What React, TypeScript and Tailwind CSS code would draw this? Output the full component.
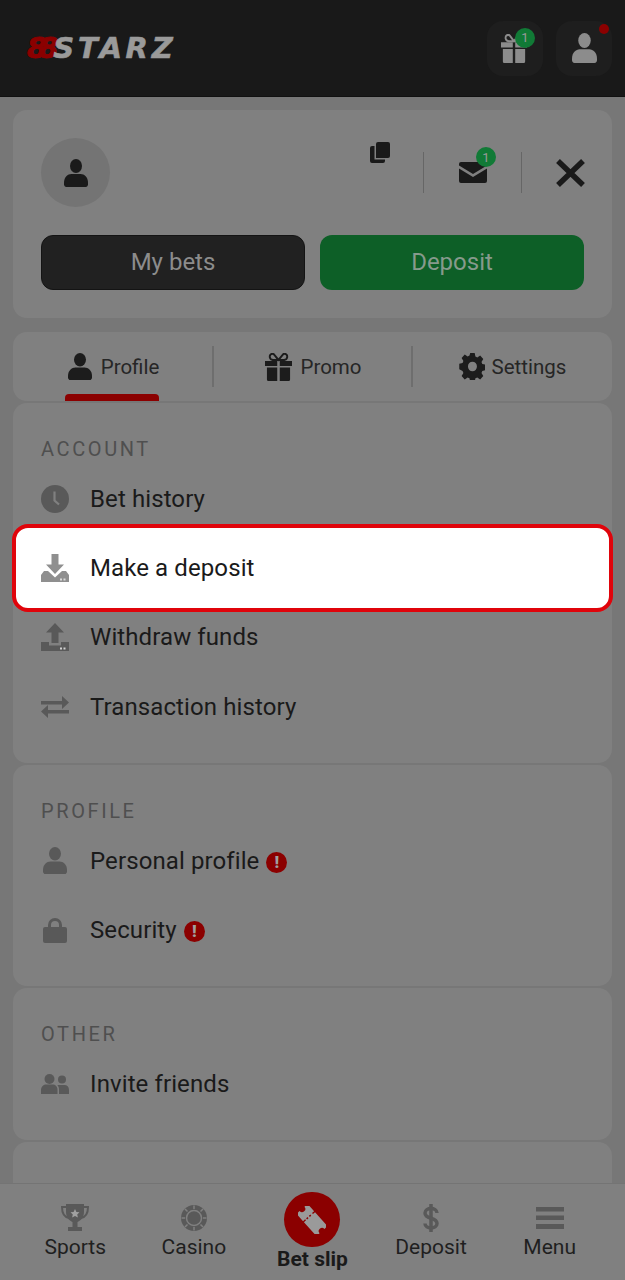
const PersonIcon = ({ className }: { className?: string }) => (
  <svg className={className} viewBox="1 1 26 26" preserveAspectRatio="none" fill="currentColor">
    <circle cx="14" cy="7.500" r="6.500" />
    <path d="M1 23c0-5 4-8 8-8h10c4 0 8 3 8 8v1.500c0 1.400-1.100 2.500-2.500 2.500h-21C2.100 27 1 25.900 1 24.500z" />
  </svg>
);

const GiftIcon = ({ className }: { className?: string }) => (
  <svg className={className} viewBox="0 0 28 28" preserveAspectRatio="none" fill="currentColor">
    <path d="M0 8h12.700v5H0zM15.300 8H28v5H15.300zM2 14.500h10.700V28H3.500A1.500 1.500 0 0 1 2 26.500zM15.300 14.500H26v12a1.500 1.500 0 0 1-1.500 1.500h-9.200z" />
    <path d="M14 7 9.500 1.600c-1-1.100-3-1-4 .3-1 1.400-.6 3.500.8 4.400L8 7h12l1.700-.7c1.400-.9 1.800-3 .8-4.400-1-1.300-3-1.400-4-.3z" fill="none" stroke="currentColor" strokeWidth="2" />
  </svg>
);

const GearIcon = ({ className }: { className?: string }) => (
  <svg className={className} viewBox="-1 0 29 28" preserveAspectRatio="none" fill="currentColor">
    <path fillRule="evenodd" d="M11.500 0h5l.8 3.700 2.100.9 3.200-2 3.500 3.500-2 3.200.9 2.100 3.700.8v5.600l-3.700.8-.9 2.100 2 3.200-3.500 3.500-3.200-2-2.100.9-.8 3.700h-5l-.8-3.700-2.100-.9-3.200 2-3.500-3.500 2-3.200-.9-2.100L-.7 16.800v-5.600l3.700-.8.900-2.100-2-3.200 3.500-3.500 3.200 2 2.100-.9zM14 9a5 5 0 1 0 0 10 5 5 0 0 0 0-10z" />
  </svg>
);

const ClockIcon = ({ className }: { className?: string }) => (
  <svg className={className} viewBox="0 0 28 28">
    <circle cx="14" cy="14" r="14" fill="currentColor" />
    <path d="M13.500 6.500v9l4.500 4" fill="none" stroke="#808080" strokeWidth="2.200" />
  </svg>
);

const TrayIcon = ({ className, up }: { className?: string; up?: boolean }) => (
  <svg className={className} viewBox="0 0 28 28" fill="currentColor">
    {up ? (
      <>
        <path d="M14 0 23 9.500h-5.500V20h-7V9.500H5z" />
        <path d="M0 19h8v3.500h12V19h8v9H0z" />
      </>
    ) : (
      <>
        <path d="M10.500 0h7v10.500H23L14 20 5 10.500h5.500z" />
        <path d="M0 21 3 17h4L14 23.500 21 17h4l3 4v7H0z" />
      </>
    )}
    <rect x="19" y="24.500" width="2" height="2" fill="#eee" opacity=".8" />
    <rect x="22.500" y="24.500" width="2" height="2" fill="#eee" opacity=".8" />
  </svg>
);

const SwapIcon = ({ className }: { className?: string }) => (
  <svg className={className} viewBox="0 0 28 22" fill="currentColor">
    <path d="M0 5h21V0l7 6.500-7 6.500V8.500H0zM28 14H7V9l-7 6.500L7 22v-4.500h21z" />
  </svg>
);

const LockIcon = ({ className }: { className?: string }) => (
  <svg className={className} viewBox="0 0 24 26" preserveAspectRatio="none" fill="currentColor">
    <path d="M5 11V8a7 7 0 0 1 14 0v3h-3V8a4 4 0 0 0-8 0v3z" />
    <rect x="0" y="10" width="24" height="16" rx="2" />
  </svg>
);

const FriendsIcon = ({ className }: { className?: string }) => (
  <svg className={className} viewBox="0 0 28 20" fill="currentColor">
    <circle cx="8.500" cy="5" r="5" />
    <circle cx="21" cy="5.500" r="4" />
    <path d="M0 16c0-3.500 2.500-5.500 5.500-5.500h6c3 0 5 2 5 5.500v4H0z" />
    <path d="M18 20v-4.500c0-2-.7-3.500-1.800-4.500h7.300c2.500 0 4.500 1.800 4.500 5v4z" />
  </svg>
);

const Alert = () => (
  <span className="mt-[3px] ml-[7px] flex h-[21px] w-[21px] items-center justify-center rounded-full bg-[#8b0000] text-[17px] leading-none font-black text-[#a0a0a0]">
    !
  </span>
);

const CountBadge = ({ className }: { className: string }) => (
  <span className={`absolute flex h-[20px] w-[20px] items-center justify-center rounded-full bg-[#117a36] text-[13px] leading-none text-[#999] ${className}`}>
    1
  </span>
);

const Row = ({ icon, label, alert }: { icon: React.ReactNode; label: string; alert?: boolean }) => (
  <div className="flex h-[69.300px] items-center pl-[28px]">
    <div className="flex w-[28px] justify-center text-[#595959]">{icon}</div>
    <span className="ml-[21px] text-[24px] tracking-[0.1px] text-[#1a1a1a]">{label}</span>
    {alert && <Alert />}
  </div>
);

const Heading = ({ children }: { children: string }) => (
  <div className="pl-[28px] text-[20px] leading-[24px] tracking-[2.600px] text-[#4f4f4f]">{children}</div>
);

const Tab = ({ icon, label, active, className }: { icon: React.ReactNode; label: string; active?: boolean; className?: string }) => (
  <div className={`relative flex items-center justify-center text-[#1c1c1c] ${className ?? ""}`}>
    {icon}
    <span className="mt-[2px] text-[20.500px] text-[#262626]">{label}</span>
    {active && <div className="absolute bottom-0 left-[52px] h-[7px] w-[94px] rounded-t-[4px] bg-[#8b0000]" />}
  </div>
);

const NavItem = ({ icon, label }: { icon: React.ReactNode; label: string }) => (
  <div className="flex flex-col items-center text-[#595959]">
    <div className="flex h-[32px] items-center">{icon}</div>
    <span className="-mt-[1px] text-[21px] leading-[28px] text-[#1f1f1f]">{label}</span>
  </div>
);

export default function App() {
  return (
    <div className="flex h-[1280px] w-[625px] flex-col overflow-hidden bg-[#777777] font-['Roboto',sans-serif]">
      {/* Header */}
      <header className="flex h-[97px] shrink-0 items-center border-b border-[#111] bg-[#191919] pr-[13px] pl-[27px]">
        <div className="mt-[1px] flex items-baseline text-[29px] leading-none font-bold italic font-['DejaVu_Sans',sans-serif]">
          <span className="tracking-[-9px] text-[#8b0000] [-webkit-text-stroke:1px_#8b0000]">88</span>
          <span className="relative ml-[4px] tracking-[3.800px] text-[#9a9a9a] [-webkit-text-stroke:0.6px_#9a9a9a]">STARZ</span>
        </div>
        <div className="ml-auto flex gap-[13px]">
          <div className="relative flex h-[55px] w-[56px] items-center justify-center rounded-[16px] bg-[#1e1e1e] text-[#8c8c8c]">
            <GiftIcon className="mr-[2px] h-[29px] w-[26px]" />
            <CountBadge className="top-[7px] left-[28px]" />
          </div>
          <div className="relative flex h-[55px] w-[56px] items-center justify-center rounded-[16px] bg-[#1e1e1e] text-[#8c8c8c]">
            <PersonIcon className="ml-[1px] h-[30px] w-[25px]" />
            <span className="absolute top-[3px] right-[3px] h-[10px] w-[10px] rounded-full bg-[#8b0000]" />
          </div>
        </div>
      </header>

      {/* Scrolling content */}
      <main className="flex min-h-0 flex-1 flex-col overflow-hidden px-[13px] pt-[13px]">
        <section className="h-[208px] shrink-0 rounded-[14px] bg-[#808080] px-[28px] pt-[28px]">
          <div className="flex h-[69px] items-center">
            <div className="flex h-[69px] w-[69px] items-center justify-center rounded-full bg-[#747474] text-[#1a1a1a]">
              <PersonIcon className="h-[28px] w-[24px]" />
            </div>
            <div className="-mr-px ml-auto flex items-center text-[#1a1a1a]">
              <svg className="mb-[40px] h-[21px] w-[20px]" viewBox="0 0 20 21" fill="currentColor">
                <path d="M6 2a2 2 0 0 1 2-2h10a2 2 0 0 1 2 2v12a2 2 0 0 1-2 2H6z" />
                <path d="M0 6a2 2 0 0 1 2-2h2.500v13.500H15V19a2 2 0 0 1-2 2H2a2 2 0 0 1-2-2z" />
              </svg>
              <div className="ml-[33px] h-[41px] w-px bg-[#666]" />
              <div className="relative ml-[35px] h-[21px] w-[28px]">
                <svg className="h-[21px] w-[28px]" viewBox="0 0 28 21" fill="currentColor">
                  <path d="M2 0h24a2 2 0 0 1 2 2v1.500L14 12 0 3.500V2a2 2 0 0 1 2-2z" />
                  <path d="M0 6.500 14 15 28 6.500V19a2 2 0 0 1-2 2H2a2 2 0 0 1-2-2z" />
                </svg>
                <CountBadge className="-top-[15px] left-[17px]" />
              </div>
              <div className="ml-[34px] h-[41px] w-px bg-[#666]" />
              <svg className="ml-[34px] h-[28px] w-[29px]" viewBox="0 0 29 28" fill="none" stroke="currentColor" strokeWidth="5.500">
                <path d="M2 2l25 24M27 2 2 26" />
              </svg>
            </div>
          </div>
          <div className="mt-[28px] grid grid-cols-2 gap-[15px]">
            <button className="h-[55px] rounded-[12px] border border-[#141414] bg-[#212121] pb-[2px] text-[24px] text-[#8c8c8c]">My bets</button>
            <button className="h-[55px] rounded-[12px] bg-[#0d5f27] pb-[2px] text-[24px] text-[#869a8c]">Deposit</button>
          </div>
        </section>

        <nav className="mt-[14px] grid h-[69px] shrink-0 grid-cols-[201px_199px_1fr] overflow-hidden rounded-[14px] bg-[#808080]">
          <div className="relative grid after:absolute after:top-[14px] after:right-0 after:h-[41px] after:w-[2px] after:bg-[#6e6e6e]">
            <Tab active className="gap-[9px]" label="Profile" icon={<PersonIcon className="h-[27px] w-[24px]" />} />
          </div>
          <div className="relative grid after:absolute after:top-[14px] after:right-0 after:h-[41px] after:w-[2px] after:bg-[#6e6e6e]">
            <Tab className="gap-[8px]" label="Promo" icon={<GiftIcon className="h-[28px] w-[27px]" />} />
          </div>
          <Tab className="gap-[7px]" label="Settings" icon={<GearIcon className="h-[27px] w-[26px]" />} />
        </nav>

        <section className="mt-[2px] h-[360px] shrink-0 rounded-[14px] bg-[#808080] pt-[34px]">
          <Heading>ACCOUNT</Heading>
          <div className="mt-[3px]">
            <Row label="Bet history" icon={<ClockIcon className="h-[28px] w-[28px]" />} />
            <div className="relative z-10 -mx-px -my-[9.350px] flex h-[88px] items-center rounded-[16px] border-4 border-[#e0040b] bg-white pl-[25px]">
              <div className="flex w-[28px] justify-center text-[#8f8f8f]">
                <TrayIcon className="h-[28px] w-[28px]" />
              </div>
              <span className="ml-[21px] text-[24px] tracking-[0.1px] text-[#1a1a1a]">Make a deposit</span>
            </div>
            <Row label="Withdraw funds" icon={<TrayIcon up className="h-[28px] w-[28px]" />} />
            <Row label="Transaction history" icon={<SwapIcon className="h-[22px] w-[28px]" />} />
          </div>
        </section>

        <section className="mt-[2px] h-[221px] shrink-0 rounded-[14px] bg-[#808080] pt-[34px]">
          <Heading>PROFILE</Heading>
          <div className="mt-[3px]">
            <Row alert label="Personal profile" icon={<PersonIcon className="h-[27px] w-[24px]" />} />
            <Row alert label="Security" icon={<LockIcon className="h-[26px] w-[24px]" />} />
          </div>
        </section>

        <section className="mt-[2px] h-[152px] shrink-0 rounded-[14px] bg-[#808080] pt-[34px]">
          <Heading>OTHER</Heading>
          <div className="mt-[3px]">
            <Row label="Invite friends" icon={<FriendsIcon className="h-[20px] w-[28px]" />} />
          </div>
        </section>

        <section className="mt-[2px] h-[100px] shrink-0 rounded-[14px] bg-[#808080]" />
      </main>

      {/* Bottom nav */}
      <footer className="z-20 grid h-[97px] shrink-0 grid-cols-5 border-t border-[#747474] bg-[#808080] px-[16px] pt-[18px]">
        <NavItem
          label="Sports"
          icon={
            <svg className="h-[28px] w-[28px]" viewBox="0 0 28 28">
              <path d="M6 3H1c0 6 2 10 7 11M22 3h5c0 6-2 10-7 11" fill="none" stroke="currentColor" strokeWidth="2" />
              <path d="M5 0h18v8c0 6-4 9-6.500 10v5H21v4H7v-4h4.500v-5C9 17 5 14 5 8z" fill="currentColor" />
              <path d="m14 5 1.400 3 3.100.3-2.300 2.100.7 3.100-2.900-1.600-2.900 1.600.7-3.100-2.300-2.100 3.100-.3z" fill="#a0a0a0" />
            </svg>
          }
        />
        <NavItem
          label="Casino"
          icon={
            <svg className="h-[26px] w-[26px]" viewBox="0 0 26 26">
              <circle cx="13" cy="13" r="13" fill="currentColor" />
              <circle cx="13" cy="13" r="7.500" fill="none" stroke="#808080" strokeWidth="1.500" />
              <path d="M13 .5v3.500M13 22v3.500M.5 13H4M22 13h3.500M4 4l2.500 2.500M19.500 19.500 22 22M22 4l-2.500 2.500M6.500 19.500 4 22" stroke="#808080" strokeWidth="1.500" />
            </svg>
          }
        />
        <div className="-mt-[10px] flex flex-col items-center">
          <div className="flex h-[55px] w-[56px] items-center justify-center rounded-full bg-[#8b0000]">
            <svg className="h-[28px] w-[28px]" viewBox="-15 -15 30 30" fill="#9a9a9a">
              <g transform="rotate(48)">
                <path d="M-16-8H-5.500v3h1.500v-3H16v4.500a3.500 3.500 0 0 0 0 7V8H-4V5h-1.500v3H-16V3.500a3.500 3.500 0 0 0 0-7zM-5.500-2.500v2h1.500v-2zM-5.500 1.500v2h1.500v-2z" />
              </g>
            </svg>
          </div>
          <span className="-mt-[2px] text-[21px] leading-[28px] font-bold text-[#1a1a1a]">Bet slip</span>
        </div>
        <NavItem
          label="Deposit"
          icon={
            <svg className="h-[28px] w-[16px]" viewBox="0 0 16 28" fill="none" stroke="currentColor" strokeWidth="3.500">
              <path d="M8 0v28" />
              <path d="M14 9c0-3-3-4.500-6-4.500S2 6 2 9c0 7 12 3.500 12 10.500 0 3-3 4.500-6 4.500s-6-1.500-6-4.500" />
            </svg>
          }
        />
        <NavItem
          label="Menu"
          icon={
            <svg className="h-[22px] w-[28px]" viewBox="0 0 28 22" fill="currentColor">
              <path d="M0 0h28v4.500H0zM0 8.500h28V13H0zM0 17h28v5H0z" />
            </svg>
          }
        />
      </footer>
    </div>
  );
}
